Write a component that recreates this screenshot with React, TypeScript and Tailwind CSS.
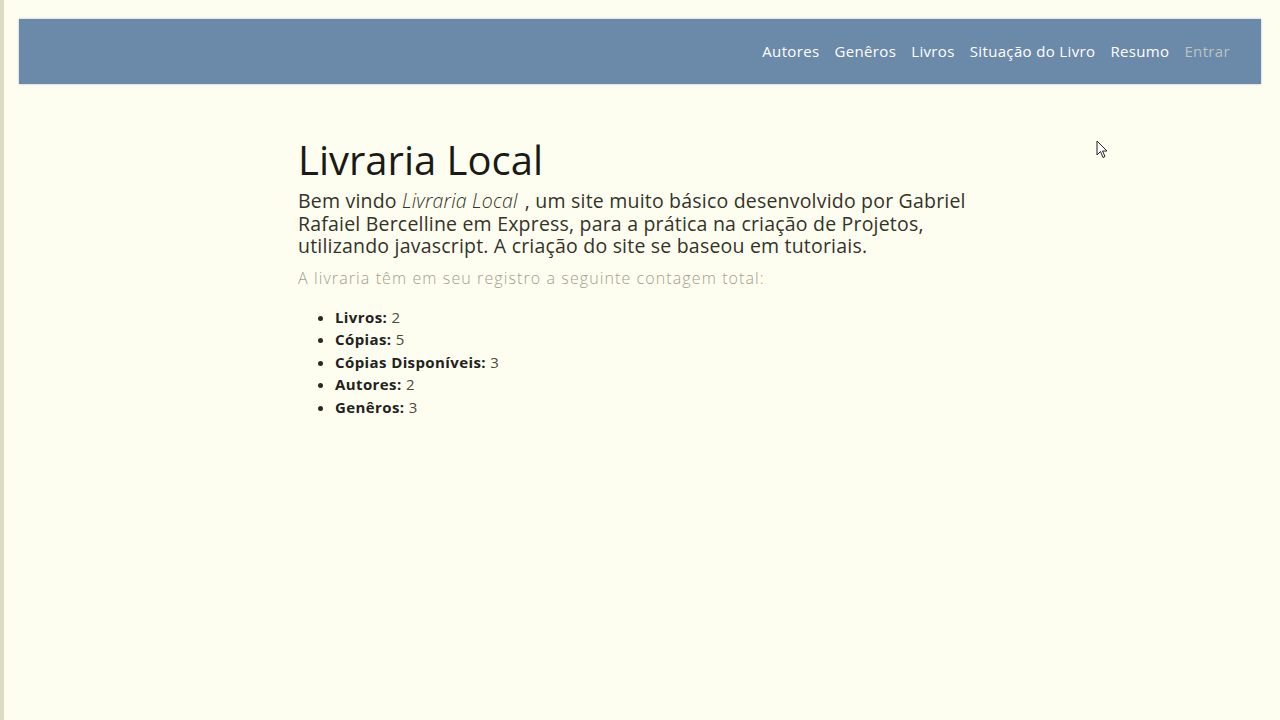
import React from 'react';

const links = ['Autores', 'Genêros', 'Livros', 'Situação do Livro', 'Resumo'];

const counts: [string, number][] = [
    ['Livros', 2],
    ['Cópias', 5],
    ['Cópias Disponíveis', 3],
    ['Autores', 2],
    ['Genêros', 3]
];

export default function App() {
    return (
        <div
            className="relative min-h-[720px] w-full bg-[#fefef0] border-l-[4px] border-[#dcdcc4] text-[#2a2a22] pt-[19px]"
            style={{ fontFamily: '"Open Sans", "Liberation Sans", sans-serif' }}
        >
            {/* Navbar */}
            <nav className="mx-[15px] mr-[19px] h-[65px] bg-[#6b89a8] shadow-[0_0_2px_rgba(120,130,200,0.6)] flex items-center justify-end pr-[31px]">
                <ul className="flex items-center gap-[15px] text-[15px] tracking-[0.35px] text-white">
                    {links.map(l => (
                        <li key={l}>{l}</li>
                    ))}
                    <li className="text-[#bcc3c2]">Entrar</li>
                </ul>
            </nav>

            {/* Content */}
            <main className="ml-[294px] w-[690px] pt-[52px]">
                <h1 className="text-[40px] leading-[48px] font-normal text-[#1a1a16]">Livraria Local</h1>
                <p className="mt-[6px] text-[19.5px] leading-[22.5px] tracking-[0.2px] text-[#33332a]">
                    Bem vindo <em className="font-light pr-[2px]">Livraria Local</em> , um site muito básico desenvolvido por Gabriel Rafaiel Bercelline em Express, para a prática na criação de Projetos, utilizando javascript. A criação do site se baseou em tutoriais.
                </p>
                <p className="mt-[8px] text-[16px] leading-[24px] tracking-[1.1px] font-light text-[#a0a08e]">
                    A livraria têm em seu registro a seguinte contagem total:
                </p>
                <ul className="mt-[16px] ml-[37px] list-disc text-[15px] leading-[22.5px] tracking-[0.4px]">
                    {counts.map(([k, v]) => (
                        <li key={k}>
                            <span className="font-bold text-[#22221c]">{k}:</span> <span className="text-[#4a4a40]">{v}</span>
                        </li>
                    ))}
                </ul>
            </main>

            {/* mouse pointer */}
            <svg className="absolute left-[1092px] top-[140px]" width="14" height="20" viewBox="0 0 14 20">
                <path d="M1 1 L1 15 L4.5 11.5 L7 17.5 L9 16.5 L6.5 11 L11 11 Z" fill="#fff" stroke="#222" strokeWidth="1" />
            </svg>
        </div>
    );
}
